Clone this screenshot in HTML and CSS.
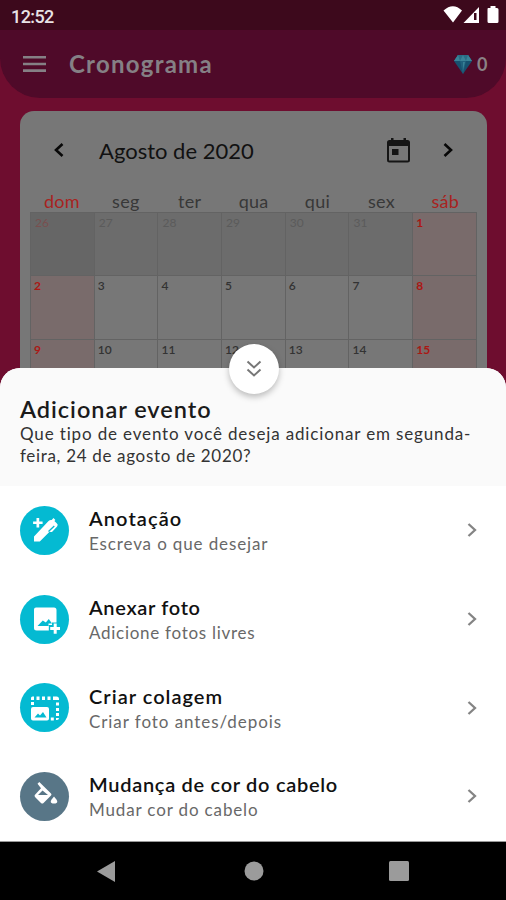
FILE: index.html
```html
<!DOCTYPE html>
<html lang="pt-BR">
<head>
<meta charset="utf-8">
<meta name="viewport" content="width=device-width, initial-scale=1">
<title>Cronograma</title>
<link rel="stylesheet" href="styles.css">
</head>
<body>
<div class="phone">
  <div class="status">
    <span class="clock">12:52</span>
    <svg class="signals" width="58" height="20" viewBox="0 0 58 20">
      <path fill="#fff" d="M.5 5.500Q10 -3 19 5.500L10 17.500ZM20.500 18 36 2V18Z"/>
      <path fill="#3d091c" d="M31 8h2.500v7H31z"/>
      <path fill="#fff" d="M45 3h2.500V1h5v2H54q1.500 0 1.500 1.500v12Q55.500 18 54 18h-8q-1.500 0-1.500-1.500v-12Q44.500 3 45 3z"/>
    </svg>
  </div>
  <header class="appbar">
    <svg class="menu" width="23" height="17" viewBox="0 0 23 17"><path fill="#858085" d="M0 0h23v2.600H0zM0 6.700h23v2.600H0zM0 13.300h23v2.600H0z"/></svg>
    <h1 class="apptitle">Cronograma</h1>
    <svg class="gem" width="18" height="19" viewBox="0 0 18 19">
      <path fill="#17516f" d="M4 0h10l4 6-9 13L0 6z"/>
      <path fill="#296e86" d="M4 0h10l4 6H0z"/>
      <path fill="#3a8397" d="M4 0 6 6H0zM14 0l4 6h-6zM9 0l3 6H6z"/>
      <path fill="#20617d" d="M6 6h6L9 19z"/>
      <path fill="#378094" d="M9 7h2l-2 8z"/>
    </svg>
    <span class="gems">0</span>
  </header>
  <main class="card">
    <div class="monthbar">
      <svg class="prev" width="10" height="14" viewBox="0 0 10 14"><path d="M8.500 1 2 7l6.500 6"/></svg>
      <h2 class="month">Agosto de 2020</h2>
      <svg class="today" width="23" height="25" viewBox="0 0 23 25">
        <path fill="#151515" fill-rule="evenodd" d="M4 0h2.500v2h10V0H19v2h1.500Q23 2 23 4.500v17.500Q23 24.500 20.500 24.500h-18Q0 24.500 0 22V4.500Q0 2 2.500 2H4zM2 8v14.500h19V8z"/>
        <path fill="#151515" d="M5 11h6.500v6H5z"/>
      </svg>
      <svg class="next" width="10" height="14" viewBox="0 0 10 14"><path d="m1.500 1 6.500 6-6.500 6"/></svg>
    </div>
    <div class="week">
      <span class="red">dom</span><span>seg</span><span>ter</span><span>qua</span><span>qui</span><span>sex</span><span class="red">sáb</span>
    </div>
    <div class="days">
      <div class="out sun">26</div><div class="out">27</div><div class="out">28</div><div class="out">29</div><div class="out">30</div><div class="out">31</div><div class="rest">1</div>
      <div class="rest">2</div><div>3</div><div>4</div><div>5</div><div>6</div><div>7</div><div class="rest">8</div>
      <div class="rest">9</div><div>10</div><div>11</div><div>12</div><div>13</div><div>14</div><div class="rest">15</div>
    </div>
  </main>
  <section class="sheet">
    <div class="collapse">
      <svg width="16" height="18" viewBox="0 0 16 18"><path d="m1.500 1.500 6.500 6 6.500-6M1.500 9.500l6.500 6 6.500-6"/></svg>
    </div>
    <div class="intro">
      <h2 class="heading">Adicionar evento</h2>
      <p class="question"><span class="q1">Que tipo de evento você deseja adicionar em segunda-</span><br><span class="q2">feira, 24 de agosto de 2020?</span></p>
    </div>
    <ul class="options">
      <li>
        <span class="disc"><svg width="30" height="30" viewBox="0 0 30 30"><path d="M6.500 3h2.700v3.400h3.400v2.700H9.200v3.400H6.500V9.100H3.100V6.400h3.400z"/><path d="M4 21.500 18.300 6.300q1.600-1.700 3.400-1.300l1.800-1.900 1.900 1.900-1 1.100 2.300 2.200q1.900 1.500.4 3.200l-4.600 4.900q-1.500 1.400-2.700 0l-10 10.100H4z"/><path class="clip" d="m18.500 16.500 5.800-5.500"/></svg></span>
        <span class="text"><b class="t1">Anotação</b><span class="s1">Escreva o que desejar</span></span>
        <svg class="go" width="10" height="14" viewBox="0 0 10 14"><path d="m1.500 1 6.500 6-6.500 6"/></svg>
      </li>
      <li>
        <span class="disc"><svg width="30" height="30" viewBox="0 0 30 30"><path fill-rule="evenodd" d="M6 3.500h18q2.500 0 2.500 2.500v12.500H22v2.500h-3.200v5.500H6.500Q4 26.500 4 24V5.500Q4 3.500 6 3.500zM7.500 22h11v-2.500H22l-3.200-4.500-3 3.500-3-2z"/><path d="M23.700 19.500h3V23h3.600v3h-3.600v3.800h-3V26h-3.500v-3h3.500z"/></svg></span>
        <span class="text"><b class="t2">Anexar foto</b><span class="s2">Adicione fotos livres</span></span>
        <svg class="go" width="10" height="14" viewBox="0 0 10 14"><path d="m1.500 1 6.500 6-6.500 6"/></svg>
      </li>
      <li>
        <span class="disc"><svg width="30" height="30" viewBox="0 0 30 30"><path d="M1 5q0-1.500 1.500-1.500H4V7H1zM6.500 3.500h3V7h-3zM12 3.500h3V7h-3zM17.500 3.500h3V7h-3zM23 3.500h3.500Q29 3.500 29 6v1h-6zM1 9h3v3H1zM26 9.500h3v3h-3zM26 15h3v3h-3zM26 20h3v3h-3zM26 25h3q0 2-2 2h-1zM20.800 24.500h3v3h-3z"/><path fill-rule="evenodd" d="M3 14h14q2 0 2 2v9.500q0 2-2 2H3q-2 0-2-2V16q0-2 2-2zM4.500 24.500h12L13 19l-3 3.500-2-2z"/></svg></span>
        <span class="text"><b class="t3">Criar colagem</b><span class="s3">Criar foto antes/depois</span></span>
        <svg class="go" width="10" height="14" viewBox="0 0 10 14"><path d="m1.500 1 6.500 6-6.500 6"/></svg>
      </li>
      <li>
        <span class="disc slate"><svg width="30" height="30" viewBox="0 0 30 30"><path fill-rule="evenodd" d="M7.500 2.700 9.300 1 21 12.500q1 1 0 2L13.500 22q-1.200 1.200-2.500 0l-6-6q-1-1.200 0-2.300l6-6.500zM12.500 9.500 8 14h10z"/><path d="M24 15.500q6.500 7 0 7t0-7"/></svg></span>
        <span class="text"><b class="t4">Mudança de cor do cabelo</b><span class="s4">Mudar cor do cabelo</span></span>
        <svg class="go" width="10" height="14" viewBox="0 0 10 14"><path d="m1.500 1 6.500 6-6.500 6"/></svg>
      </li>
    </ul>
  </section>
  <nav class="navbar">
    <svg width="18" height="21" viewBox="0 0 18 21"><path d="M18 0v21L0 10.500z"/></svg>
    <svg class="home" width="20" height="20" viewBox="0 0 20 20"><circle cx="10" cy="10" r="9.500"/></svg>
    <svg width="20" height="20" viewBox="0 0 20 20"><rect width="20" height="20" rx="1.500"/></svg>
  </nav>
</div>
</body>
</html>
```
FILE: styles.css
```css
* { box-sizing: border-box; margin: 0; padding: 0; }
body { font-family: Lato, "Open Sans", sans-serif; background: #6e0d2f; }
.phone { width: 506px; height: 900px; display: flex; flex-direction: column; overflow: hidden; background: #6e0d2f; }

.status { height: 30px; flex: none; display: flex; justify-content: space-between; padding: 5px 4px 0 11px; background: #3d091c; }
.clock { font: 500 18px/23px Roboto, sans-serif; letter-spacing: -.6px; color: #e8e3e5; }
.signals { margin-right: 1px; }

.appbar { height: 68px; flex: none; display: flex; align-items: center; padding: 0 18px 0 23px; background: #4f0a29; border-radius: 0 0 40px 40px; }
.apptitle { margin-left: 23px; font-size: 24px; line-height: 30px; font-weight: 700; letter-spacing: 1.25px; color: #858085; white-space: nowrap; }
.gem { margin-left: auto; }
.gems { width: 11px; margin-left: 5px; font-size: 18px; font-weight: 700; color: #8a8286; }

.card { width: 467px; height: 257px; flex: none; margin: 13px 0 0 20px; padding: 0 10px; border-radius: 14px 14px 0 0; background: #777; overflow: hidden; }
.monthbar { height: 78px; display: flex; align-items: center; padding: 0 24px; }
.monthbar .month { margin-left: 35px; padding-top: 1px; font-size: 22px; font-weight: 400; color: #111; white-space: nowrap; }
.today { margin-left: auto; }
.next { margin-left: 33px; }
.prev path, .next path { fill: none; stroke: #080808; stroke-width: 2.6; }
.week { display: grid; grid-template-columns: repeat(7, 63.900px); height: 23px; text-align: center; font-size: 18px; line-height: 25px; color: #383838; letter-spacing: .3px; }
.week .red { color: #a8231f; }
.days { display: grid; grid-template-columns: repeat(7, 63.700px); grid-auto-rows: 63.400px; width: 447px; border-top: 1px solid #636363; border-left: 1px solid #636363; }
.days div { padding: 2px 0 0 3px; border-right: 1px solid #636363; border-bottom: 1px solid #636363; font-size: 12px; line-height: 16px; font-weight: 600; color: #333; letter-spacing: .1px; }
.days .out { background: #6c6c6c; color: #5b5b5b; font-weight: 400; padding-left: 4px; }
.days .out.sun { background: #666; color: #794f4f; }
.days .rest { background: #796b6b; color: #ab1714; font-weight: 700; }

.sheet { position: relative; height: 474px; flex: none; background: #fff; border-radius: 20px 20px 0 0; border-bottom: 1px solid #999; }
.collapse { position: absolute; left: 229px; top: -24px; width: 50px; height: 50px; border-radius: 50%; background: #fff; display: grid; place-items: center; box-shadow: 0 3px 6px rgba(0,0,0,.25); }
.collapse path { fill: none; stroke: #777; stroke-width: 2; }
.intro { height: 118px; padding: 27px 20px 0; background: #fafafa; border-radius: 20px 20px 0 0; white-space: nowrap; }
.heading { font-size: 23.500px; line-height: 28px; font-weight: 600; letter-spacing: .97px; color: #1b1b1b; }
.question { font-size: 17px; line-height: 22px; color: #333; }
.q1 { letter-spacing: .85px; }
.q2 { letter-spacing: .67px; }
.options { list-style: none; }
.options li { height: 88.700px; display: flex; align-items: center; padding: 0 29px 0 20px; }
.disc { width: 49px; height: 49px; flex: none; border-radius: 50%; background: #04bad2; display: grid; place-items: center; }
.disc.slate { background: #587687; }
.disc svg { fill: #fff; }
.disc .clip { fill: none; stroke: #04bad2; stroke-width: 1.3; }
.text { display: flex; flex-direction: column; align-items: flex-start; margin-left: 20px; padding-top: 1px; white-space: nowrap; }
.text b { font-size: 20px; line-height: 26px; font-weight: 600; color: #111; }
.text span { font-size: 17px; line-height: 25px; color: #686868; }
.text .t1 { letter-spacing: 1.1px; }
.text .s1 { letter-spacing: .87px; }
.text .t2 { letter-spacing: .67px; }
.text .s2 { letter-spacing: .72px; }
.text .t3 { letter-spacing: 1.02px; }
.text .s3 { letter-spacing: .93px; }
.text .t4 { letter-spacing: .7px; }
.text .s4 { letter-spacing: .85px; }
.go { margin-left: auto; }
.go path { fill: none; stroke: #848484; stroke-width: 2.3; }

.navbar { height: 58px; flex: none; background: #000; display: flex; align-items: center; justify-content: space-between; padding: 0 97px; fill: #9b9b9b; }
.home { margin-left: 3px; }
```
